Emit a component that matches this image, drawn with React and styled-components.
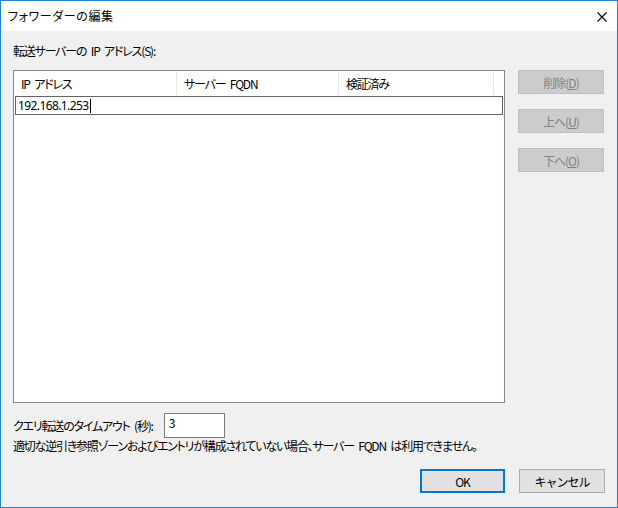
import React from 'react';
import styled, { createGlobalStyle } from 'styled-components';

const GlobalStyle = createGlobalStyle`
  html, body {
    margin: 0;
    padding: 0;
    background: #ffffff;
  }
  body {
    font-family: "Noto Sans CJK JP", "Noto Sans", sans-serif;
    font-size: 12px;
    font-feature-settings: "palt";
    letter-spacing: -1.2px;
    word-spacing: 3px;
    color: #000000;
  }
`;

function App() {
    return (
        <>
            <GlobalStyle/>
            <Dialog>
                <TitleBar>
                    <Title>フォワーダーの編集</Title>
                    <Close aria-label="閉じる">
                        <svg width="10" height="10" viewBox="0 0 10 10">
                            <path d="M0.5 0.5 L9.5 9.5 M9.5 0.5 L0.5 9.5" stroke="#000" strokeWidth="1.1" fill="none"/>
                        </svg>
                    </Close>
                </TitleBar>
                <Body>
                    <Label>転送サーバーの IP アドレス(S):</Label>
                    <MainRow>
                        <ListBox>
                            <Header>
                                <HeaderCell width={163}>IP アドレス</HeaderCell>
                                <HeaderCell width={162}>サーバー FQDN</HeaderCell>
                                <HeaderCell width={155}>検証済み</HeaderCell>
                            </Header>
                            <EditRow>
                                <EditText>192.168.1.253</EditText>
                                <Caret/>
                            </EditRow>
                        </ListBox>
                        <SideButtons>
                            <SideButton disabled>削除(<u>D</u>)</SideButton>
                            <SideButton disabled>上へ(<u>U</u>)</SideButton>
                            <SideButton disabled>下へ(<u>O</u>)</SideButton>
                        </SideButtons>
                    </MainRow>
                    <TimeoutRow>
                        <span>クエリ転送のタイムアウト (秒):</span>
                        <TimeoutInput>3</TimeoutInput>
                    </TimeoutRow>
                    <Note>適切な逆引き参照ゾーンおよびエントリが構成されていない場合、サーバー FQDN は利用できません。</Note>
                    <Footer>
                        <Button primary>OK</Button>
                        <Button>キャンセル</Button>
                    </Footer>
                </Body>
            </Dialog>
        </>
    );
}

const Dialog = styled.div`
width: 618px;
height: 508px;
box-sizing: border-box;
border: 1px solid #1883d7;
display: flex;
flex-direction: column;
`;

const TitleBar = styled.div`
height: 30px;
background: #ffffff;
display: flex;
align-items: center;
justify-content: space-between;
padding: 0 10px 0 7px;
`;

const Title = styled.div`
font-size: 12px;
line-height: 16px;
letter-spacing: 0.6px;
`;

const Close = styled.div`
width: 10px;
height: 10px;
display: flex;
margin-top: 1px;
`;

const Body = styled.div`
flex: 1;
background: #f0f0f0;
padding: 0 12px;
display: flex;
flex-direction: column;
`;

const Label = styled.div`
margin-top: 12px;
line-height: 16px;
`;

const MainRow = styled.div`
display: flex;
gap: 13px;
margin-top: 11px;
`;

const ListBox = styled.div`
width: 492px;
height: 333px;
box-sizing: border-box;
border: 1px solid #828790;
background: #ffffff;
`;

const Header = styled.div`
display: flex;
height: 25px;
`;

const HeaderCell = styled.div`
width: ${p => p.width}px;
box-sizing: border-box;
padding-left: 7px;
display: flex;
align-items: center;
border-right: 1px solid #e5e5e5;
margin: 1px 0;
`;

const EditRow = styled.div`
width: 488px;
height: 19px;
margin-left: 1px;
box-sizing: border-box;
border: 1px solid #646464;
display: flex;
align-items: center;
padding-left: 2px;
`;

const EditText = styled.span`
font-family: "Noto Sans", sans-serif;
font-size: 12px;
letter-spacing: -0.6px;
`;

const Caret = styled.span`
width: 1px;
height: 14px;
background: #000000;
margin-left: 1px;
`;

const SideButtons = styled.div`
display: flex;
flex-direction: column;
gap: 15px;
`;

const SideButton = styled.button`
width: 86px;
height: 24px;
box-sizing: border-box;
background: #cccccc;
border: 1px solid #bfbfbf;
color: #838383;
font-family: inherit;
font-size: 12px;
letter-spacing: -1px;
padding: 0;
`;

const TimeoutRow = styled.div`
display: flex;
align-items: center;
gap: 11px;
margin-top: 10px;
`;

const TimeoutInput = styled.div`
width: 61px;
height: 25px;
box-sizing: border-box;
border: 1px solid #7a7a7a;
background: #ffffff;
padding: 1px 0 0 4px;
line-height: 16px;
`;

const Note = styled.div`
line-height: 16px;
margin-top: 0px;
`;

const Footer = styled.div`
display: flex;
justify-content: flex-end;
gap: 14px;
margin-top: 15px;
`;

const Button = styled.button`
width: ${p => p.primary ? 85 : 86}px;
height: 24px;
box-sizing: border-box;
background: #e1e1e1;
border: ${p => p.primary ? '2px solid #0078d7' : '1px solid #adadad'};
font-family: inherit;
font-size: 12px;
letter-spacing: -1px;
color: #000000;
padding: 0;
`;

export default App;
